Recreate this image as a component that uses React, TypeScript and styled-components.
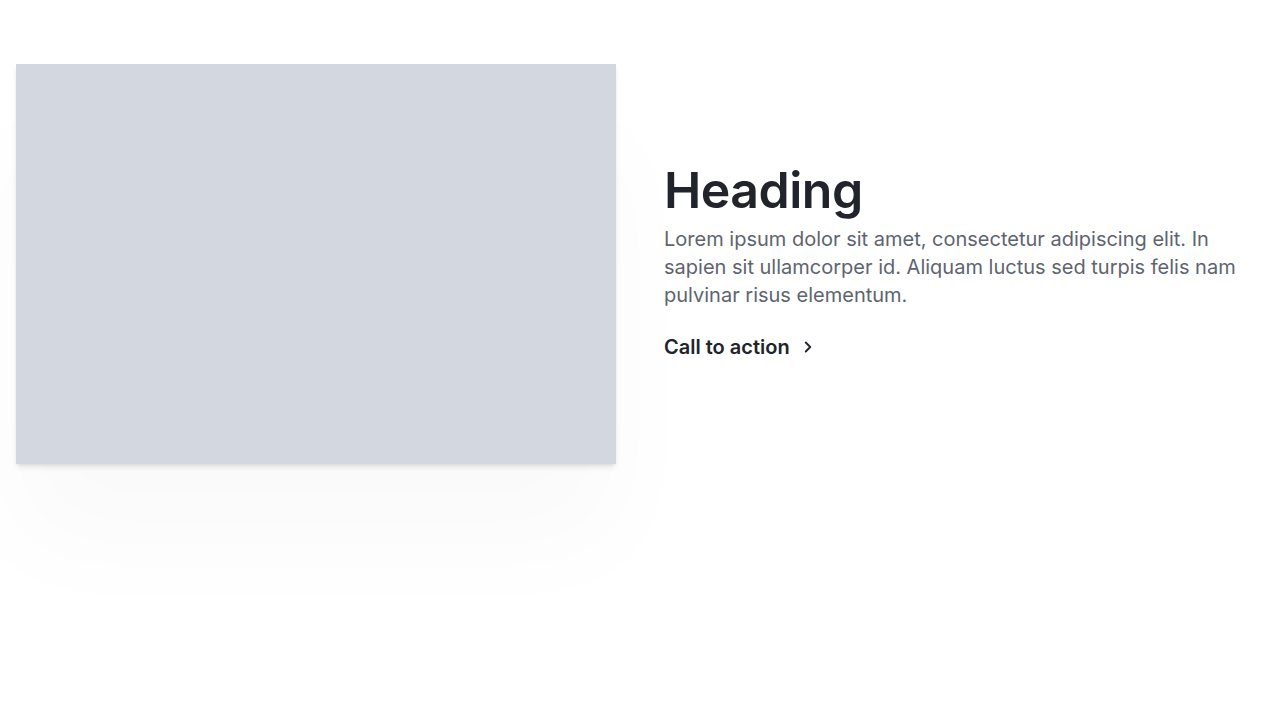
import React from "react";
import styled, { createGlobalStyle } from "styled-components";

const Global = createGlobalStyle`
  html, body { margin: 0; padding: 0; background: #ffffff; min-height: 100%; height: 100%; }
  #root { min-height: 100%; }
  body { font-family: Inter, "Noto Sans", sans-serif; -webkit-font-smoothing: antialiased; }
`;

const Section = styled.section`
  padding: 64px 16px;
  display: grid;
  grid-template-columns: 600px 1fr;
  gap: 48px;
  align-items: center;
`;

const Media = styled.div`
  width: 600px;
  height: 400px;
  background: #d3d8e0;
  box-shadow: 0 4px 6px -1px rgba(0, 0, 0, 0.1), 0 2px 4px -2px rgba(0, 0, 0, 0.08),
    0 80px 100px 0 rgba(0, 0, 0, 0.025);
`;

const Content = styled.div`
  display: flex;
  flex-direction: column;
  padding-right: 16px;
`;

const Heading = styled.h2`
  margin: 0;
  font-size: 50px;
  line-height: 44px;
  font-weight: 600;
  color: #21252b;
  letter-spacing: -0.5px;
`;

const Body = styled.p`
  margin: 13px 0 0;
  font-size: 20px;
  line-height: 28px;
  color: #5d6470;
`;

const Cta = styled.a`
  margin-top: 24px;
  display: inline-flex;
  align-items: center;
  gap: 9px;
  font-size: 20px;
  line-height: 28px;
  font-weight: 600;
  color: #21252b;
  text-decoration: none;
  align-self: flex-start;
`;

export default function App() {
  return (
    <>
      <Global />
      <Section>
        <Media />
        <Content>
          <Heading>Heading</Heading>
          <Body>
            Lorem ipsum dolor sit amet, consectetur adipiscing elit. In sapien sit ullamcorper id.
            Aliquam luctus sed turpis felis nam pulvinar risus elementum.
          </Body>
          <Cta href="#">
            Call to action
            <svg width="18" height="18" viewBox="0 0 24 24" fill="none" stroke="currentColor" strokeWidth="2.5" strokeLinecap="round" strokeLinejoin="round">
              <path d="M9 6l6 6-6 6" />
            </svg>
          </Cta>
        </Content>
      </Section>
    </>
  );
}
